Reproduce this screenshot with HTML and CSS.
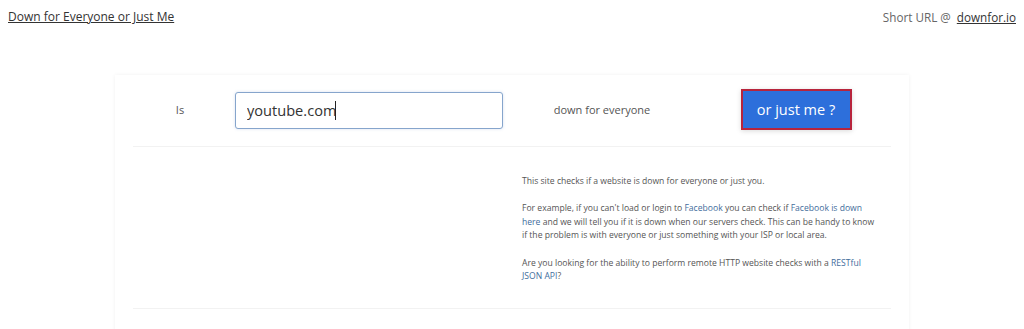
FILE: index.html
```html
<!DOCTYPE html>
<html lang="en">
<head>
  <meta charset="UTF-8">
  <title>Down for Everyone or Just Me</title>
  <link rel="stylesheet" href="styles.css">
</head>
<body>
  <header class="topbar">
    <a class="brand" href="#">Down for Everyone or Just Me</a>
    <div class="short-url">Short URL @ <a href="#">downfor.io</a></div>
  </header>

  <main class="card">
    <!-- Check form -->
    <form class="check-row">
      <div class="label">Is</div>
      <div class="field">
        <input type="text" value="youtube.com">
        <span class="caret"></span>
      </div>
      <div class="label">down for everyone</div>
      <div class="action">
        <button type="button">or just me ?</button>
      </div>
    </form>

    <!-- About text -->
    <section class="about">
      <div></div>
      <div class="about-text">
        <p>This site checks if a website is down for everyone or just you.</p>
        <p>For example, if you can't load or login to <a href="#">Facebook</a> you can check if <a href="#">Facebook is down here</a> and we will tell you if it is down when our servers check. This can be handy to know if the problem is with everyone or just something with your ISP or local area.</p>
        <p>Are you looking for the ability to perform remote HTTP website checks with a <a href="#">RESTful JSON API</a>?</p>
      </div>
    </section>
  </main>
</body>
</html>
```

FILE: styles.css
```css
/* Global */
body {
  margin: 0;
  background: #fff;
  font-family: 'Open Sans', 'Noto Sans', sans-serif;
  color: #555;
}
a {
  color: #3f6d9c;
  text-decoration: none;
}

/* Top bar */
.topbar {
  display: flex;
  justify-content: space-between;
  align-items: center;
  padding: 8px 8px 0 8px;
  font-size: 12px;
}
.brand {
  color: #333;
  text-decoration: underline;
}
.short-url {
  color: #666;
  font-size: 11.7px;
}
.short-url a {
  color: #333;
  text-decoration: underline;
  margin-left: 3px;
}

/* Card */
.card {
  width: 758px;
  margin: 50px 0 0 115px;
  padding: 0 18px;
  background: #fff;
  box-shadow: 0 0 4px rgba(0, 0, 0, 0.06);
  min-height: 260px;
}

/* Form row */
.check-row {
  display: grid;
  grid-template-columns: 94px 276px 198px 1fr;
  align-items: center;
  padding: 14px 0 16px;
  border-bottom: 1px solid #f2f2f2;
}
.label {
  text-align: center;
  font-size: 11px;
  color: #555;
}
.field {
  position: relative;
  padding-left: 8px;
}
.field input {
  display: block;
  box-sizing: border-box;
  width: 268px;
  height: 37px;
  margin-top: 1px;
  padding: 0 11px;
  border: 1px solid #86a5cc;
  border-radius: 3px;
  box-shadow: 0 0 3px rgba(90, 130, 190, 0.25);
  font-family: inherit;
  font-size: 14.6px;
  color: #333;
  outline: none;
}
.caret {
  position: absolute;
  left: 108px;
  top: 10px;
  width: 1px;
  height: 19px;
  background: #222;
}
.action {
  text-align: center;
}
.action button {
  width: 111px;
  height: 41px;
  background: #2d6fdb;
  border: 2px solid #b8243c;
  color: #fff;
  font-family: inherit;
  font-size: 14.5px;
  box-shadow: 0 1px 5px rgba(0, 0, 0, 0.15);
  cursor: pointer;
}

/* About */
.about {
  display: grid;
  grid-template-columns: 1fr 1fr;
  padding: 28px 0 24px;
  border-bottom: 1px solid #f2f2f2;
}
.about-text {
  padding: 0 10px;
  font-size: 8.6px;
  line-height: 13.6px;
}
.about-text p {
  margin: 0 0 13.6px;
}
.about-text p:last-child {
  margin-bottom: 0;
}
```
